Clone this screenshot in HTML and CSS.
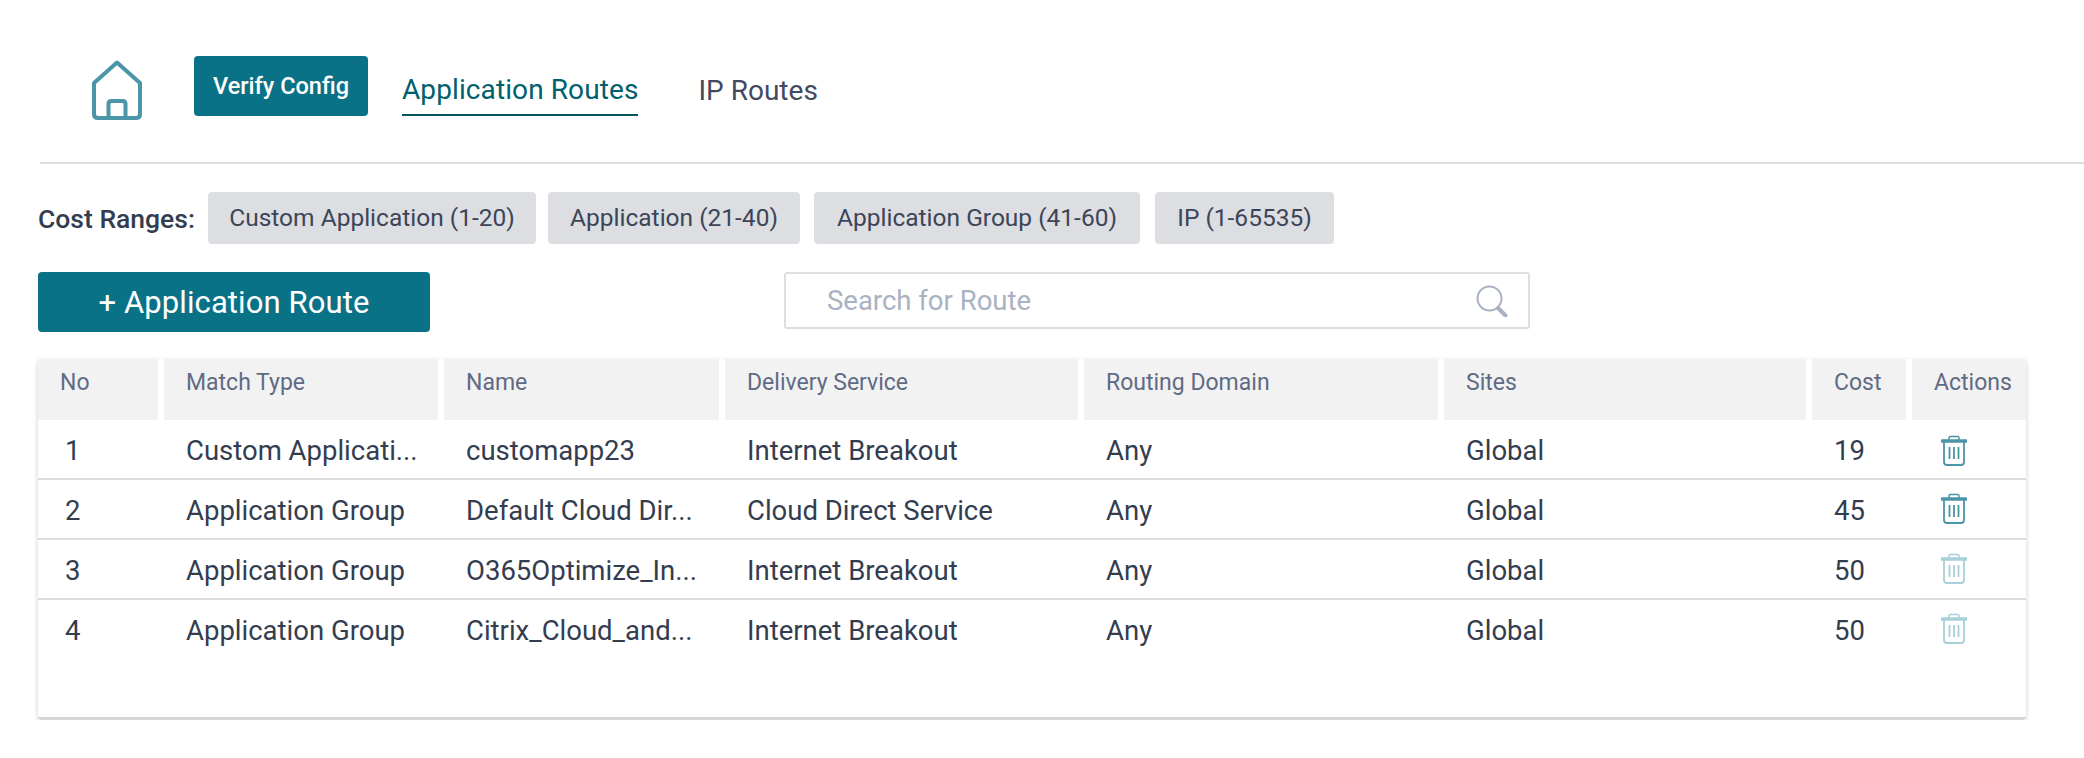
FILE: index.html
```html
<!DOCTYPE html>
<html lang="en">
<head>
  <meta charset="UTF-8">
  <title>Application Routes</title>
  <link rel="stylesheet" href="styles.css">
</head>
<body>
  <header class="topbar">
    <svg class="home-icon" width="50" height="60" viewBox="0 0 50 60" fill="none" stroke="#4b95a8" stroke-width="4" stroke-linejoin="round">
      <path d="M25 2.500 L48 23 V54 Q48 58 44 58 H6 Q2 58 2 54 V23 Z"/>
      <path d="M16.500 58 V44 Q16.500 41 19.500 41 H30.500 Q33.500 41 33.500 44 V58"/>
    </svg>
    <button class="verify-btn">Verify Config</button>
    <nav class="tabs">
      <a class="tab tab-active">Application Routes</a>
      <a class="tab">IP Routes</a>
    </nav>
  </header>

  <main>
    <div class="cost-ranges">
      <span class="cost-label">Cost Ranges:</span>
      <span class="chip chip-custom">Custom Application (1-20)</span>
      <span class="chip chip-app">Application (21-40)</span>
      <span class="chip chip-group">Application Group (41-60)</span>
      <span class="chip chip-ip">IP (1-65535)</span>
    </div>

    <div class="toolbar">
      <button class="add-btn">+ Application Route</button>
      <div class="search">
        <span class="search-text">Search for Route</span>
        <svg width="32" height="32" viewBox="0 0 32 32" fill="none" stroke="#a9b2c3">
          <circle cx="13.500" cy="13.500" r="12" stroke-width="2"/>
          <path d="M22 23 L29.500 30.500" stroke-width="4" stroke-linecap="round"/>
        </svg>
      </div>
    </div>

    <div class="routes-table">
      <div class="table-head">
        <div class="head-cell">No</div>
        <div class="head-cell">Match Type</div>
        <div class="head-cell">Name</div>
        <div class="head-cell">Delivery Service</div>
        <div class="head-cell">Routing Domain</div>
        <div class="head-cell">Sites</div>
        <div class="head-cell">Cost</div>
        <div class="head-cell">Actions</div>
      </div>

      <div class="table-row table-row-first">
        <div class="cell cell-no">1</div>
        <div class="cell">Custom Applicati...</div>
        <div class="cell">customapp23</div>
        <div class="cell">Internet Breakout</div>
        <div class="cell">Any</div>
        <div class="cell">Global</div>
        <div class="cell">19</div>
        <div class="cell cell-action">
          <svg class="trash" width="26" height="31" viewBox="0 0 26 31" fill="none" stroke="currentColor">
            <path d="M8 5 V3 Q8 1.500 9.500 1.500 H16.500 Q18 1.500 18 3 V5" stroke-width="1.500"/>
            <path d="M1 6 H25" stroke-width="3.500" stroke-linecap="round"/>
            <path d="M3 7 V27 Q3 30 6 30 H20 Q23 30 23 27 V7" stroke-width="1.800"/>
            <path d="M8.500 12 V24 M13 12 V24 M17.500 12 V24" stroke-width="1.800"/>
          </svg>
        </div>
      </div>
      <div class="table-row">
        <div class="cell cell-no">2</div>
        <div class="cell">Application Group</div>
        <div class="cell">Default Cloud Dir...</div>
        <div class="cell">Cloud Direct Service</div>
        <div class="cell">Any</div>
        <div class="cell">Global</div>
        <div class="cell">45</div>
        <div class="cell cell-action">
          <svg class="trash" width="26" height="31" viewBox="0 0 26 31" fill="none" stroke="currentColor">
            <path d="M8 5 V3 Q8 1.500 9.500 1.500 H16.500 Q18 1.500 18 3 V5" stroke-width="1.500"/>
            <path d="M1 6 H25" stroke-width="3.500" stroke-linecap="round"/>
            <path d="M3 7 V27 Q3 30 6 30 H20 Q23 30 23 27 V7" stroke-width="1.800"/>
            <path d="M8.500 12 V24 M13 12 V24 M17.500 12 V24" stroke-width="1.800"/>
          </svg>
        </div>
      </div>
      <div class="table-row">
        <div class="cell cell-no">3</div>
        <div class="cell">Application Group</div>
        <div class="cell">O365Optimize_In...</div>
        <div class="cell">Internet Breakout</div>
        <div class="cell">Any</div>
        <div class="cell">Global</div>
        <div class="cell">50</div>
        <div class="cell cell-action trash-disabled">
          <svg class="trash" width="26" height="31" viewBox="0 0 26 31" fill="none" stroke="currentColor">
            <path d="M8 5 V3 Q8 1.500 9.500 1.500 H16.500 Q18 1.500 18 3 V5" stroke-width="1.500"/>
            <path d="M1 6 H25" stroke-width="3.500" stroke-linecap="round"/>
            <path d="M3 7 V27 Q3 30 6 30 H20 Q23 30 23 27 V7" stroke-width="1.800"/>
            <path d="M8.500 12 V24 M13 12 V24 M17.500 12 V24" stroke-width="1.800"/>
          </svg>
        </div>
      </div>
      <div class="table-row table-row-last">
        <div class="cell cell-no">4</div>
        <div class="cell">Application Group</div>
        <div class="cell">Citrix_Cloud_and...</div>
        <div class="cell">Internet Breakout</div>
        <div class="cell">Any</div>
        <div class="cell">Global</div>
        <div class="cell">50</div>
        <div class="cell cell-action trash-disabled">
          <svg class="trash" width="26" height="31" viewBox="0 0 26 31" fill="none" stroke="currentColor">
            <path d="M8 5 V3 Q8 1.500 9.500 1.500 H16.500 Q18 1.500 18 3 V5" stroke-width="1.500"/>
            <path d="M1 6 H25" stroke-width="3.500" stroke-linecap="round"/>
            <path d="M3 7 V27 Q3 30 6 30 H20 Q23 30 23 27 V7" stroke-width="1.800"/>
            <path d="M8.500 12 V24 M13 12 V24 M17.500 12 V24" stroke-width="1.800"/>
          </svg>
        </div>
      </div>
    </div>
  </main>
</body>
</html>
```

FILE: styles.css
```css
* {
  box-sizing: border-box;
  margin: 0;
  padding: 0;
}

body {
  font-family: "Roboto", "Liberation Sans", sans-serif;
  background-color: #fff;
  color: #333d4f;
  overflow: hidden;
}

.topbar {
  display: flex;
  align-items: flex-start;
  height: 164px;
  margin-left: 40px;
  padding-left: 52px;
  border-bottom: 2px solid #dcdee2;
}

.home-icon {
  margin-top: 60px;
}

.verify-btn {
  width: 174px;
  height: 60px;
  margin-top: 56px;
  margin-left: 52px;
  padding-bottom: 1px;
  border: none;
  border-radius: 4px;
  background-color: #0a7286;
  color: #fff;
  font-family: inherit;
  font-size: 23.500px;
  font-weight: 500;
}

.tabs {
  display: flex;
  gap: 60px;
  margin-top: 56px;
  margin-left: 34px;
}

.tab {
  display: flex;
  align-items: center;
  height: 60px;
  padding-top: 8px;
  font-size: 28px;
  color: #414a5e;
}

.tab-active {
  border-bottom: 2px solid #00575f;
  color: #00606c;
  letter-spacing: 0.1px;
}

.cost-ranges {
  display: flex;
  align-items: center;
  margin-top: 28px;
  margin-left: 38px;
}

.cost-label {
  width: 170px;
  font-size: 26.500px;
  font-weight: 500;
}

.chip {
  display: flex;
  align-items: center;
  justify-content: center;
  height: 52px;
  padding-bottom: 2px;
  border-radius: 4px;
  background-color: #dcdee2;
  font-size: 24.500px;
  color: #3c4558;
}

.chip-custom {
  width: 328px;
  margin-right: 12px;
}

.chip-app {
  width: 252px;
  margin-right: 14px;
}

.chip-group {
  width: 326px;
  margin-right: 15px;
}

.chip-ip {
  width: 179px;
}

.toolbar {
  display: flex;
  align-items: flex-start;
  margin-top: 28px;
  margin-left: 38px;
}

.add-btn {
  width: 392px;
  height: 60px;
  border: none;
  border-radius: 4px;
  background-color: #0a7286;
  color: #fff;
  font-family: inherit;
  font-size: 31px;
  letter-spacing: 0.1px;
}

.search {
  display: flex;
  align-items: center;
  justify-content: space-between;
  width: 746px;
  height: 57px;
  margin-left: 354px;
  padding: 0 20px 0 41px;
  border: 2px solid #dcdee2;
  border-radius: 3px;
}

.search-text {
  font-size: 27.500px;
  color: #a9b2c3;
}

.routes-table {
  --route-columns: 120px 274px 275px 353px 354px 362px 94px 114px;
  width: 1988px;
  height: 361px;
  margin-top: 27px;
  margin-left: 38px;
  border-bottom: 3px solid #d6d6d6;
  border-radius: 4px;
  box-shadow: 0 2px 5px rgba(0, 0, 0, 0.2);
  overflow: hidden;
}

.table-head,
.table-row {
  display: grid;
  grid-template-columns: var(--route-columns);
  column-gap: 6px;
}

.table-head {
  height: 61px;
}

.head-cell {
  padding: 10px 0 0 22px;
  background-color: #f2f2f2;
  font-size: 23px;
  line-height: 28px;
  color: #5f6b85;
}

.table-row {
  align-items: center;
  height: 60px;
  padding-top: 2px;
  border-bottom: 2px solid #dcdcdc;
  font-size: 27.500px;
}

.table-row-first {
  padding-top: 2px;
}

.table-row-last {
  border-bottom: none;
  padding-top: 0;
}

.cell {
  padding-left: 22px;
  white-space: nowrap;
}

.cell-no {
  padding-left: 27px;
}

.cell-action {
  display: flex;
  margin-bottom: 3px;
  padding-left: 29px;
  color: #4b95a8;
}

.table-row-first .cell-action {
  margin-bottom: 0;
  margin-top: 1px;
}

.trash-disabled {
  color: #a8d0d9;
}
```
